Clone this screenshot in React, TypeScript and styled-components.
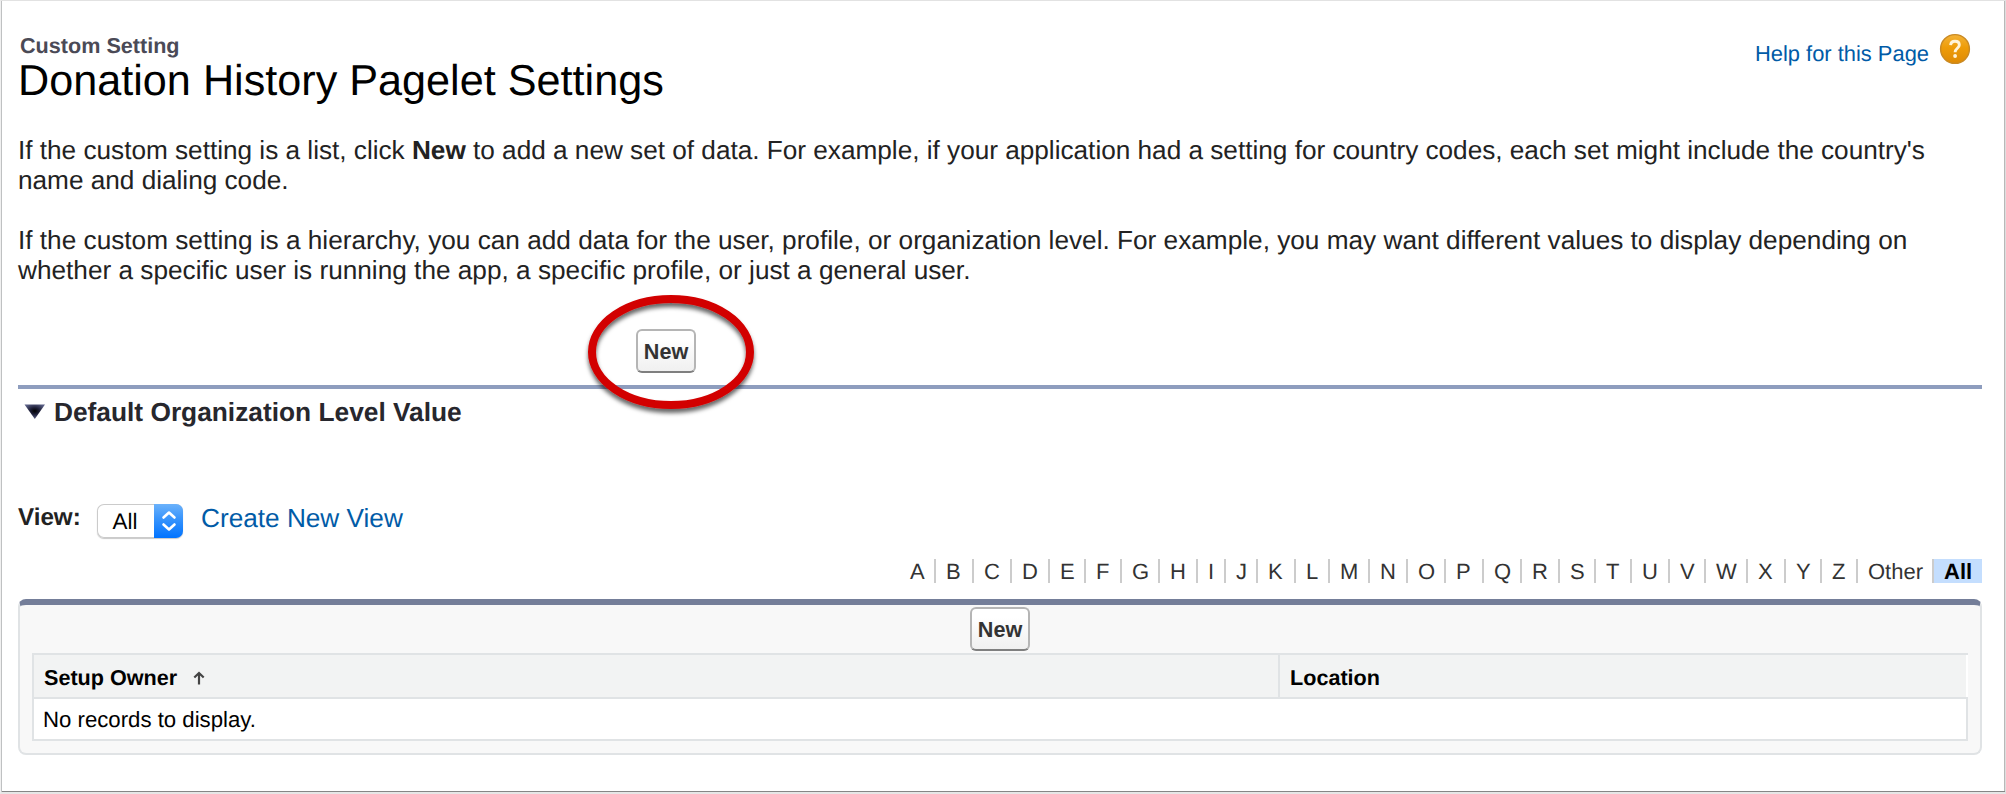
import React from 'react';
import styled, { createGlobalStyle } from 'styled-components';

const GlobalStyle = createGlobalStyle`
  * { box-sizing: border-box; }
  body { margin: 0; background: #fff; }
  body, button { font-family: "Liberation Sans", Arial, sans-serif; }
`;

const Page = styled.main`
  position: relative;
  width: 2006px;
  height: 794px;
  padding: 1px 23px 0 17px;
  display: flex;
  flex-direction: column;
  border: solid;
  border-width: 1px 1px 2px 1px;
  border-color: #e2e2e2 #dedede #e6e6e6 #f0f0f0;
  box-shadow: inset 1px 0 #bfc1c2, inset 0 -1px #868686, inset -1px 0 #b8b8b8;
  color: #222;
  text-rendering: geometricPrecision;
  overflow: hidden;
`;

const Header = styled.header`
  display: flex;
  justify-content: space-between;
  align-items: flex-start;
  height: 133px;
`;

const Heading = styled.div`
  display: flex;
  flex-direction: column;
  padding-top: 32px;
`;

const Kind = styled.div`
  padding-left: 2px;
  font-size: 21.6px;
  font-weight: bold;
  line-height: 24px;
  color: #4a4a56;
`;

const Title = styled.h1`
  margin: 0;
  font-size: 43.2px;
  font-weight: normal;
  line-height: 46px;
  color: #000;
`;

const HelpLink = styled.a`
  display: flex;
  align-items: flex-start;
  gap: 10px;
  padding: 31px 11px 0 0;
  font-size: 21.9px;
  line-height: 30px;
  color: #015ba7;
  span { padding-top: 6px; }
`;

const Paragraph = styled.p<{ $spacing?: number }>`
  margin: 0 0 30px;
  width: 1930px;
  font-size: 26.2px;
  letter-spacing: ${(p) => p.$spacing ?? 0}px;
  line-height: 30px;
  white-space: nowrap;
`;

const Actions = styled.div`
  display: flex;
  height: 56px;
  margin-top: 14px;
  padding-left: 618px;
`;

const Button = styled.button`
  width: 60px;
  height: 44px;
  padding: 1px 0 0;
  border: 2px solid #b5b5b5;
  border-bottom-color: #7f7f7f;
  border-radius: 6px;
  background: linear-gradient(#fff 20%, #f0f0f0);
  font-size: 21.6px;
  font-weight: bold;
  color: #333;
`;

const Section = styled.section`
  display: flex;
  align-items: flex-start;
  height: 115px;
  padding-left: 5px;
  border-top: 4px solid #8e9dbe;
`;

const SectionTitle = styled.h2`
  margin: 8px 0 0 8px;
  font-size: 26.3px;
  line-height: 30px;
  color: #27272d;
`;

const Twisty = styled.svg`
  margin-top: 11px;
`;

const ViewBar = styled.div`
  display: flex;
  align-items: flex-start;
  height: 59px;
`;

const ViewLabel = styled.label`
  width: 79px;
  padding-top: 3px;
  font-size: 24.2px;
  font-weight: bold;
  line-height: 30px;
`;

const Select = styled.div`
  display: flex;
  justify-content: space-between;
  width: 86px;
  height: 34px;
  margin-top: 4px;
  border-radius: 7px;
  background: #fff;
  box-shadow: inset 0 0 0 1px #cbcbcb, 0 1px 1px rgba(0, 0, 0, 0.22);
  font-size: 22.4px;
  line-height: 36px;
  color: #000;
  span { padding-left: 15.5px; }
`;

const Stepper = styled.div`
  display: flex;
  align-items: center;
  justify-content: center;
  width: 29px;
  height: 34px;
  border-radius: 0 7px 7px 0;
  background: linear-gradient(#6bb2fb, #3b96fc 40%, #0073ff);
`;

const CreateLink = styled.a`
  padding: 3px 0 0 18px;
  font-size: 26.2px;
  line-height: 30px;
  color: #015ba7;
`;

const Rolodex = styled.nav`
  display: flex;
  justify-content: flex-end;
  height: 40px;
`;

const Letter = styled.a<{ $width: number; $active?: boolean }>`
  width: ${(p) => p.$width}px;
  height: 24px;
  padding-left: 10px;
  border-right: ${(p) => (p.$active ? 'none' : '2px solid #ccc')};
  background: ${(p) => (p.$active ? '#c4defe' : 'transparent')};
  color: ${(p) => (p.$active ? '#000' : '#333')};
  font-size: 22px;
  font-weight: ${(p) => (p.$active ? 'bold' : 'normal')};
  line-height: 26px;
`;

const Panel = styled.section`
  height: 156px;
  padding: 2px 12px 0;
  border: 2px solid #e0e3e5;
  border-top: 6px solid #747e99;
  border-radius: 8px;
  background: #f8f8f8;
`;

const PanelActions = styled.div`
  display: flex;
  height: 46px;
  padding-left: 938px;
`;

const HeadRow = styled.div`
  display: flex;
  height: 44px;
  border: solid #e0e3e5;
  border-width: 2px 0 0 2px;
  box-shadow: inset -2px 0 #fff;
  background: #f2f3f3;
`;

const HeadCell = styled.div<{ $width?: number }>`
  display: flex;
  align-items: flex-start;
  gap: 16px;
  width: ${(p) => (p.$width ? `${p.$width}px` : 'auto')};
  padding: 8px 0 0 10px;
  border-right: ${(p) => (p.$width ? '2px solid #e0e3e5' : 'none')};
  font-size: 21.6px;
  font-weight: bold;
  line-height: 30px;
  color: #000;
`;

const SortArrow = styled.svg`
  margin-top: 7px;
`;

const EmptyRow = styled.div`
  height: 44px;
  padding: 6px 0 0 9px;
  border: 2px solid #e0e3e5;
  background: #fff;
  font-size: 22.2px;
  line-height: 30px;
  color: #000;
`;

const Highlight = styled.svg`
  position: absolute;
  left: 577px;
  top: 284px;
  pointer-events: none;
`;

const letters: [string, number][] = [
  ['A', 36], ['B', 38], ['C', 38], ['D', 38], ['E', 36], ['F', 36], ['G', 38],
  ['H', 38], ['I', 28], ['J', 32], ['K', 38], ['L', 34], ['M', 40], ['N', 38],
  ['O', 38], ['P', 38], ['Q', 38], ['R', 38], ['S', 36], ['T', 36], ['U', 38],
  ['V', 36], ['W', 42], ['X', 38], ['Y', 36], ['Z', 36], ['Other', 76],
];

const HelpIcon = () => (
  <svg width="32" height="32" viewBox="0 0 32 32">
    <defs>
      <linearGradient id="help" x1="0" y1="0" x2="0" y2="1">
        <stop offset="0" stopColor="#f3b338" />
        <stop offset="0.45" stopColor="#ee9c08" />
        <stop offset="1" stopColor="#de8a05" />
      </linearGradient>
    </defs>
    <circle cx="16" cy="16" r="14.4" fill="url(#help)" stroke="#c98a25" strokeWidth="1.4" />
    <path d="M11.6 12.2c.2-2.6 2-4 4.4-4 2.6 0 4.3 1.5 4.3 3.7 0 3.2-4.2 3.5-4.2 7.3" fill="none" stroke="#fff3d8" strokeWidth="2.9" />
    <circle cx="16.1" cy="23" r="1.9" fill="#fff3d8" />
  </svg>
);

export default function App() {
  return (
    <>
      <GlobalStyle />
      <Page>
        <Header>
          <Heading>
            <Kind>Custom Setting</Kind>
            <Title>Donation History Pagelet Settings</Title>
          </Heading>
          <HelpLink>
            <span>Help for this Page</span>
            <HelpIcon />
          </HelpLink>
        </Header>
        <Paragraph $spacing={-0.012}>
          If the custom setting is a list, click <b>New</b> to add a new set of data. For example, if your
          application had a setting for country codes, each set might include the country's
          <br />
          name and dialing code.
        </Paragraph>
        <Paragraph $spacing={0.005}>
          If the custom setting is a hierarchy, you can add data for the user, profile, or organization level. For
          example, you may want different values to display depending on
          <br />
          whether a specific user is running the app, a specific profile, or just a general user.
        </Paragraph>
        <Actions>
          <Button>New</Button>
        </Actions>
        <Section>
          <Twisty width="23" height="20" viewBox="0 0 23 20">
            <defs>
              <radialGradient id="twisty" cx="0.5" cy="0.45" r="0.55">
                <stop offset="0" stopColor="#000" />
                <stop offset="0.4" stopColor="#1c1d35" />
                <stop offset="1" stopColor="#5a5f85" />
              </radialGradient>
            </defs>
            <path d="M1.5 4.5H22L11.8 19z" fill="url(#twisty)" />
          </Twisty>
          <SectionTitle>Default Organization Level Value</SectionTitle>
        </Section>
        <ViewBar>
          <ViewLabel>View:</ViewLabel>
          <Select>
            <span>All</span>
            <Stepper>
              <svg width="16" height="22" viewBox="0 0 16 22" fill="none" stroke="#fff" strokeWidth="2.6" strokeLinecap="round" strokeLinejoin="round">
                <path d="M2.500 7.500L8 2.500L13.500 7.500M2.500 14.500L8 19.500L13.500 14.500" />
              </svg>
            </Stepper>
          </Select>
          <CreateLink>Create New View</CreateLink>
        </ViewBar>
        <Rolodex>
          {letters.map(([label, width]) => (
            <Letter key={label} $width={width}>{label}</Letter>
          ))}
          <Letter $width={48} $active>All</Letter>
        </Rolodex>
        <Panel>
          <PanelActions>
            <Button>New</Button>
          </PanelActions>
          <HeadRow>
            <HeadCell $width={1246}>
              Setup Owner
              <SortArrow width="12" height="16" viewBox="0 0 12 16" fill="none" stroke="#444" strokeWidth="2.2">
                <path d="M6 14.500V3M1.300 7.500L6 3L10.700 7.500" />
              </SortArrow>
            </HeadCell>
            <HeadCell>Location</HeadCell>
          </HeadRow>
          <EmptyRow>No records to display.</EmptyRow>
        </Panel>
        <Highlight width="190" height="140" viewBox="578 285 190 140">
          <defs>
            <filter id="drop" x="-10%" y="-10%" width="125%" height="130%">
              <feDropShadow dx="0" dy="4" stdDeviation="2.2" floodColor="#000" floodOpacity="0.6" />
            </filter>
          </defs>
          <ellipse cx="671" cy="352" rx="79" ry="53" fill="none" stroke="#d20000" strokeWidth="8" filter="url(#drop)" />
        </Highlight>
      </Page>
    </>
  );
}
